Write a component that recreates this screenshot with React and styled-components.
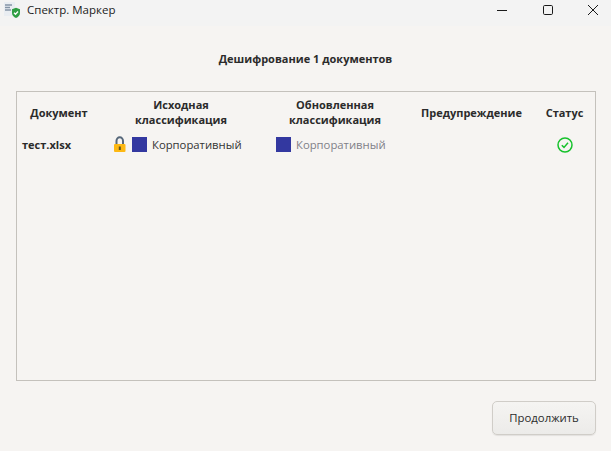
import React from 'react';
import styled, {createGlobalStyle} from 'styled-components';

const GlobalStyle = createGlobalStyle`
  html, body {
    margin: 0;
    padding: 0;
    height: 100%;
    background: #f6f4f2;
  }
`;

const Window = styled.div`
  width: 611px;
  height: 451px;
  display: flex;
  flex-direction: column;
  overflow: hidden;
  background: #f6f4f2;
  color: #2b2b2b;
  font-family: "Open Sans", "Noto Sans", sans-serif;
  font-size: 11.3px;
`;

const TitleBar = styled.div`
  height: 26px;
  flex: none;
  display: flex;
  align-items: flex-start;
  background: #f3f3f3;
`;

const AppLogo = styled.svg`
  width: 17px;
  height: 17px;
  margin: 2px 0 0 4px;
`;

const AppName = styled.span`
  margin: 1px 0 0 6px;
  font-size: 11.5px;
  line-height: 18px;
  color: #1c1c1c;
`;

const WindowButtons = styled.div`
  margin-left: auto;
  display: flex;
  gap: 9.5px;
`;

const WindowButton = styled.div`
  width: 36px;
  height: 20px;
  display: flex;
  align-items: center;
  justify-content: center;
`;

const Heading = styled.h1`
  margin: 25px 0 0;
  height: 16px;
  text-align: center;
  font-size: 11px;
  line-height: 16px;
  font-weight: 700;
  color: #2b2b2b;
`;

const Panel = styled.div`
  margin: 24px 15px 0 16px;
  height: 290px;
  box-sizing: border-box;
  border: 1px solid #c4c1bc;
`;

const Columns = styled.div`
  display: grid;
  grid-template-columns: 84px 160px 148px 125px 1fr;
  align-items: center;
`;

const HeaderRow = styled(Columns)`
  height: 40px;
`;

const HeaderCell = styled.div`
  text-align: center;
  font-weight: 700;
  font-size: 11px;
  line-height: 15px;
`;

const Row = styled(Columns)`
  height: 24px;
`;

const FileName = styled.div`
  padding-left: 5px;
  font-weight: 700;
  font-size: 11px;
`;

const Classification = styled.div`
  display: flex;
  align-items: center;
  padding-left: ${p => p.$indent}px;
  color: ${p => p.$muted ? '#7f7f88' : '#333'};
`;

const LockIcon = styled.svg`
  width: 16px;
  height: 17px;
  margin-right: 4px;
`;

const Swatch = styled.span`
  width: 15px;
  height: 15px;
  margin-right: 5px;
  background: #3338a0;
`;

const StatusCell = styled.div`
  display: flex;
  justify-content: center;
  padding: 2px 0 0 1px;
`;

const Footer = styled.div`
  display: flex;
  justify-content: flex-end;
  padding: 20px 15px 0 0;
`;

const ContinueButton = styled.button`
  width: 104px;
  height: 34px;
  border: 1px solid #d0cdc8;
  border-radius: 5px;
  background: linear-gradient(#f5f4f2, #ecebe9);
  box-shadow: 0 1px 1px rgba(0, 0, 0, 0.08);
  font-family: inherit;
  font-size: 11.35px;
  color: #2b2b2b;
  padding: 0 0 2px;
`;

export default function App() {
  return (
    <Window>
      <GlobalStyle />
      <TitleBar>
        <AppLogo viewBox="0 0 17 17">
          <rect x="0" y="0" width="11" height="14" fill="#e9edf2" />
          <path d="M1 3h7M1 5.5h5M1 8h6" stroke="#8494a6" strokeWidth="1.3" />
          <path d="M12 5.800l4 1.400v3.800c0 2.400-1.800 4-4 5-2.200-1-4-2.600-4-5V7.200z" fill="#2f9e44" />
          <path d="M10 10.800l1.500 1.500 2.500-2.800" stroke="#fff" strokeWidth="1.300" fill="none" />
        </AppLogo>
        <AppName>Спектр. Маркер</AppName>
        <WindowButtons>
          <WindowButton>
            <svg width="10" height="10" viewBox="0 0 10 10"><path d="M0 5.500h10" stroke="#1a1a1a" /></svg>
          </WindowButton>
          <WindowButton>
            <svg width="10" height="10" viewBox="0 0 10 10"><rect x="0.500" y="0.500" width="9" height="9" rx="1.200" fill="none" stroke="#1a1a1a" /></svg>
          </WindowButton>
          <WindowButton>
            <svg width="10" height="10" viewBox="0 0 10 10"><path d="M0 0l10 10M10 0L0 10" stroke="#1a1a1a" /></svg>
          </WindowButton>
        </WindowButtons>
      </TitleBar>

      <Heading>Дешифрование 1 документов</Heading>

      <Panel>
        <HeaderRow>
          <HeaderCell>Документ</HeaderCell>
          <HeaderCell>Исходная<br />классификация</HeaderCell>
          <HeaderCell>Обновленная<br />классификация</HeaderCell>
          <HeaderCell>Предупреждение</HeaderCell>
          <HeaderCell>Статус</HeaderCell>
        </HeaderRow>
        <Row>
          <FileName>тест.xlsx</FileName>
          <Classification $indent={11}>
            <LockIcon viewBox="0 0 16 17">
              <path d="M4.500 9V5a3 3.500 0 0 1 6.500 0v4" fill="none" stroke="#56677a" strokeWidth="2" />
              <rect x="2" y="8" width="11.500" height="8" rx="1" fill="#fdb813" />
              <rect x="6.800" y="10.500" width="2" height="3.500" fill="#5f5320" />
            </LockIcon>
            <Swatch />
            Корпоративный
          </Classification>
          <Classification $indent={15} $muted>
            <Swatch />
            Корпоративный
          </Classification>
          <div />
          <StatusCell>
            <svg width="16" height="16" viewBox="0 0 16 16">
              <circle cx="8" cy="8" r="7" fill="none" stroke="#16c22c" strokeWidth="1.500" />
              <path d="M4.800 8.200l2.200 2.200 4-4.600" fill="none" stroke="#16c22c" strokeWidth="1.500" />
            </svg>
          </StatusCell>
        </Row>
      </Panel>

      <Footer>
        <ContinueButton>Продолжить</ContinueButton>
      </Footer>
    </Window>
  );
}
